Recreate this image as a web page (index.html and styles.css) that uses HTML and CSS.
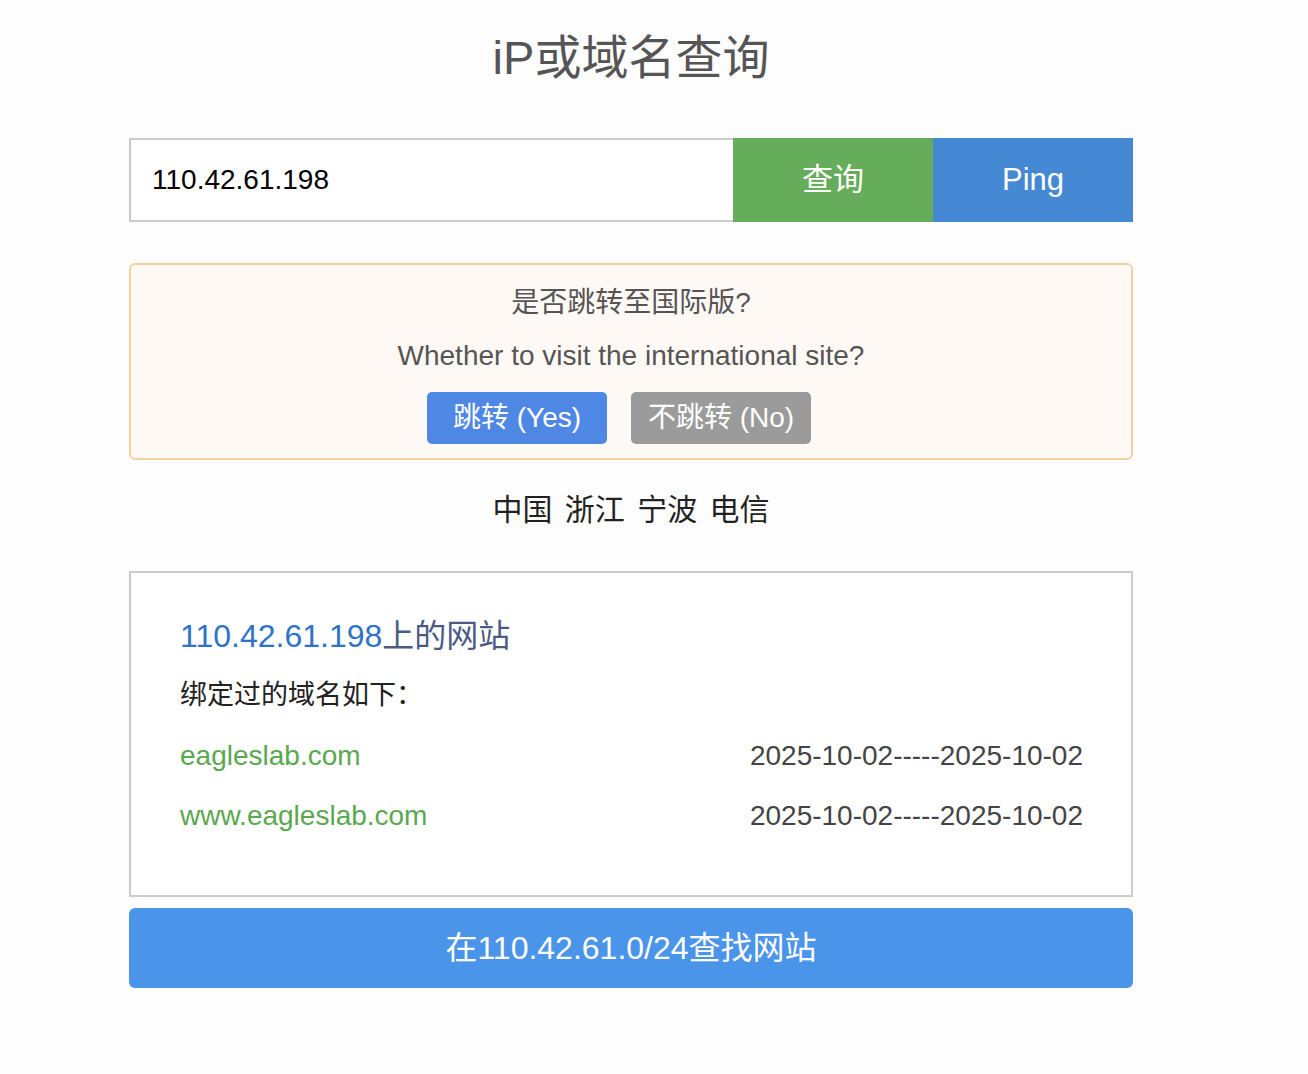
FILE: index.html
```html
<!DOCTYPE html>
<html lang="zh-CN">
<head>
    <meta charset="UTF-8">
    <meta name="viewport" content="width=device-width, initial-scale=1.0">
    <title>iP或域名查询</title>
    <link rel="stylesheet" href="styles.css">
</head>
<body>
    <div class="container">
        <h1 class="title">iP或域名查询</h1>

        <form class="search-bar">
            <input type="text" class="search-input" value="110.42.61.198">
            <button type="submit" class="btn btn-query">查询</button>
            <button type="button" class="btn btn-ping">Ping</button>
        </form>

        <div class="notice">
            <p class="notice-cn">是否跳转至国际版?</p>
            <p class="notice-en">Whether to visit the international site?</p>
            <div class="notice-actions">
                <button class="small-btn small-btn-yes">跳转 (Yes)</button>
                <button class="small-btn small-btn-no">不跳转 (No)</button>
            </div>
        </div>

        <p class="location">中国 浙江 宁波 电信</p>

        <div class="result">
            <h2 class="result-title"><span class="result-ip">110.42.61.198</span>上的网站</h2>
            <p class="result-sub">绑定过的域名如下：</p>
            <ul class="domain-list">
                <li class="domain-row">
                    <a href="#" class="domain-name">eagleslab.com</a>
                    <span class="domain-date">2025-10-02-----2025-10-02</span>
                </li>
                <li class="domain-row">
                    <a href="#" class="domain-name">www.eagleslab.com</a>
                    <span class="domain-date">2025-10-02-----2025-10-02</span>
                </li>
            </ul>
        </div>

        <a href="#" class="range-btn">在110.42.61.0/24查找网站</a>
    </div>
</body>
</html>
```

FILE: styles.css
```css
:root {
    --text-color: #555555;
    --dark-color: #222222;
    --green-color: #66ad5b;
    --blue-color: #4588d3;
    --border-color: #cccccc;
}

* {
    box-sizing: border-box;
    margin: 0;
    padding: 0;
}

body {
    font-family: 'Liberation Sans', Arial, 'Noto Sans CJK SC', sans-serif;
    background-color: #fdfdfd;
    color: var(--text-color);
    margin: 8px;
}

.container {
    width: 1004px;
    margin-left: 121px;
}

.title {
    font-size: 47px;
    font-weight: 400;
    line-height: 62px;
    text-align: center;
    margin-top: 19px;
    color: #555;
}

/* search bar */
.search-bar {
    display: flex;
    height: 84px;
    margin-top: 49px;
}

.search-input {
    flex: 1;
    border: 2px solid var(--border-color);
    border-right: none;
    background: white;
    padding: 0 21px;
    font-family: inherit;
    font-size: 28px;
    color: #000;
    outline: none;
}

.btn {
    width: 200px;
    border: none;
    color: white;
    font-family: inherit;
    font-size: 31px;
    line-height: 40px;
    padding-bottom: 1px;
    cursor: pointer;
}

.btn-query {
    background-color: var(--green-color);
}

.btn-ping {
    background-color: var(--blue-color);
}

/* international notice */
.notice {
    margin-top: 41px;
    border: 2px solid #f3d1a1;
    border-radius: 6px;
    background-color: #fff9f5;
    padding: 20px 0 14px;
    text-align: center;
}

.notice-cn {
    font-size: 28px;
    line-height: 36px;
}

.notice-en {
    font-size: 28px;
    line-height: 36px;
    margin-top: 17px;
}

.notice-actions {
    display: flex;
    justify-content: center;
    gap: 24px;
    margin-top: 18px;
    padding-right: 24px;
}

.small-btn {
    width: 180px;
    height: 52px;
    border: none;
    border-radius: 5px;
    color: white;
    font-family: inherit;
    font-size: 28px;
    line-height: 36px;
    padding-bottom: 0;
    cursor: pointer;
}

.small-btn-yes {
    background-color: #4f87e4;
}

.small-btn-no {
    background-color: #9b9b9b;
}

.location {
    font-size: 30px;
    line-height: 40px;
    word-spacing: 4px;
    text-align: center;
    color: var(--dark-color);
    margin: 30px 0 41px;
}

/* result box */
.result {
    border: 2px solid var(--border-color);
    background: white;
    padding: 43px 48px 61px 49px;
}

.result-title {
    font-size: 32px;
    font-weight: 400;
    line-height: 40px;
    color: #4b5b84;
}

.result-ip {
    color: #2f72c9;
}

.result-sub {
    font-size: 27px;
    line-height: 36px;
    color: var(--dark-color);
    margin-top: 21px;
}

.domain-list {
    list-style: none;
    margin-top: 25px;
}

.domain-row {
    display: flex;
    justify-content: space-between;
    font-size: 28px;
    line-height: 36px;
}

.domain-row + .domain-row {
    margin-top: 24px;
}

.domain-name {
    color: #5aa84f;
    text-decoration: none;
}

.domain-date {
    color: #444;
}

.range-btn {
    display: block;
    margin-top: 11px;
    height: 80px;
    line-height: 80px;
    border-radius: 6px;
    background-color: #4a94ea;
    color: white;
    font-size: 32px;
    text-align: center;
    text-decoration: none;
}
```
